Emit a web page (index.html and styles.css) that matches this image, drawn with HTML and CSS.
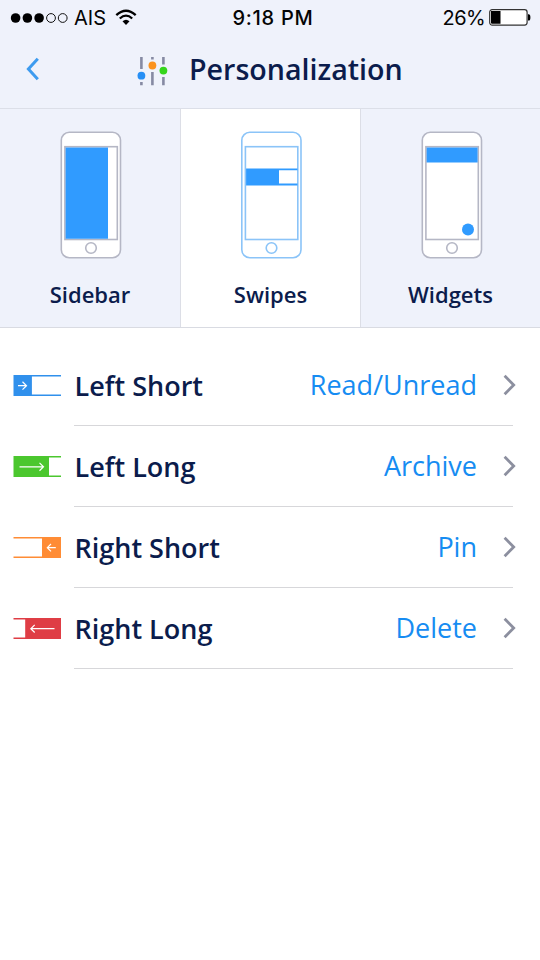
FILE: index.html
```html
<!DOCTYPE html>
<html lang="en">
<head>
<meta charset="utf-8">
<title>Personalization</title>
<link rel="stylesheet" href="styles.css">
</head>
<body>
<header class="top">
  <div class="status">
    <div class="carrier">
      <svg width="58" height="12" viewBox="0 0 58 12"><g fill="#000"><circle cx="5.6" cy="6" r="4.8"/><circle cx="17.4" cy="6" r="4.8"/><circle cx="29.1" cy="6" r="4.8"/></g><g fill="none" stroke="#111" stroke-width="1"><circle cx="41" cy="6" r="4.4"/><circle cx="52.7" cy="6" r="4.4"/></g></svg>
      <span class="ais">AIS</span>
      <svg class="wifi" width="22" height="17" viewBox="0 0 22 17"><g fill="none" stroke="#000" stroke-width="2.3"><path d="M1.3 6.2Q11 -2.8 20.7 6.2"/><path d="M4.8 9.5Q11 3.8 17.2 9.5"/></g><path d="M7.5 12.3Q11 9.3 14.5 12.3L11 16Z"/></svg>
    </div>
    <span class="time">9:18 PM</span>
    <div class="battery">
      <span class="percent">26%</span>
      <svg width="42" height="17" viewBox="0 0 42 17"><rect x=".7" y=".7" width="37.4" height="15.4" rx="2.5" fill="#fff" stroke="#333" stroke-width="1.2"/><path d="M2 2h9.5v12.8H3Q2 14.8 2 13.8ZM39 5.2h.6q1.8 0 1.8 3.2t-1.8 3.2H39Z"/></svg>
    </div>
  </div>
  <div class="nav">
    <svg class="back" width="14" height="24" viewBox="0 0 14 24"><path d="M11.8 1.8 2.4 12l9.4 10.2" fill="none" stroke="#3d9bef" stroke-width="3"/></svg>
    <svg class="sliders" width="31" height="30" viewBox="0 0 31 30"><path d="M4.4 1v12M4.4 26v3.2M15.4 1v2.5M15.4 16v13.2M26.4 1v7.5M26.4 21v8.2" stroke="#868aa3" stroke-width="2.6"/><circle cx="4.4" cy="19.7" r="3.9" fill="#268ff5"/><circle cx="15.4" cy="9.5" r="3.9" fill="#fb931e"/><circle cx="26.4" cy="14.6" r="3.9" fill="#35d51b"/></svg>
    <h1>Personalization</h1>
  </div>
</header>
<nav class="tabs">
  <div class="tab">
    <svg width="62" height="128" viewBox="0 0 62 128"><g fill="#fff" stroke="#b5b7c5" stroke-width="1.6"><rect x="1.3" y="1.3" width="59.2" height="125.4" rx="8"/><rect x="4.9" y="15.7" width="52.4" height="92.8"/><circle cx="31" cy="117" r="5.3"/></g><path d="M5.6 16.5H48v91.2H5.6Z" fill="#309bff"/></svg>
    <span>Sidebar</span>
  </div>
  <div class="tab active">
    <svg width="62" height="128" viewBox="-0.5 0 62 128"><g fill="#fff" stroke="#8bc4f8" stroke-width="1.6"><rect x="1.3" y="1.3" width="59.2" height="125.4" rx="8"/><rect x="4.9" y="15.7" width="52.4" height="92.8"/><circle cx="31" cy="117" r="5.3"/></g><path d="M5.6 37.6H57v1.6H38.5V52.6H57v1.8H5.6Z" fill="#309bff"/></svg>
    <span>Swipes</span>
  </div>
  <div class="tab">
    <svg width="62" height="128" viewBox="0 0 62 128"><g fill="#fff" stroke="#b5b7c5" stroke-width="1.6"><rect x="1.3" y="1.3" width="59.2" height="125.4" rx="8"/><rect x="4.9" y="15.7" width="52.4" height="92.8"/><circle cx="31" cy="117" r="5.3"/></g><path d="M5.6 16.5H56.6V31.5H5.6Z" fill="#309bff"/><circle cx="47" cy="98.5" r="6" fill="#309bff"/></svg>
    <span>Widgets</span>
  </div>
</nav>
<main class="list">
  <div class="row">
    <svg class="swipe" width="48" height="21" viewBox="0 0 48 21"><path d="M.5 0H48V1.6H18.9V19.4H48V21H.5Z" fill="#3090ec"/><path d="M5 10.7h8.5M9.5 6.8l4 3.9-4 3.9" class="arrow"/></svg>
    <div class="content"><span class="label">Left Short</span><span class="value">Read/Unread</span>
    <svg class="chevron" width="14" height="22" viewBox="0 0 14 22"><path d="M1.6 1.8 10.7 11l-9.1 9.2"/></svg></div>
  </div>
  <div class="row">
    <svg class="swipe" width="48" height="21" viewBox="0 0 48 21"><path d="M.5 0H48V1.6H36V19.4H48V21H.5Z" fill="#4bc72e"/><path d="M6.5 10.8h24M26.5 6.9l4 3.9-4 3.9" class="arrow"/></svg>
    <div class="content"><span class="label">Left Long</span><span class="value">Archive</span>
    <svg class="chevron" width="14" height="22" viewBox="0 0 14 22"><path d="M1.6 1.8 10.7 11l-9.1 9.2"/></svg></div>
  </div>
  <div class="row">
    <svg class="swipe" width="48" height="21" viewBox="0 0 48 21"><path d="M.5 0H48V21H.5V19.4H29V1.6H.5Z" fill="#ff8c35"/><path d="M42.8 10.7h-8.3M38 7l-3.7 3.7 3.7 3.7" class="arrow"/></svg>
    <div class="content"><span class="label">Right Short</span><span class="value">Pin</span>
    <svg class="chevron" width="14" height="22" viewBox="0 0 14 22"><path d="M1.6 1.8 10.7 11l-9.1 9.2"/></svg></div>
  </div>
  <div class="row">
    <svg class="swipe" width="48" height="21" viewBox="0 0 48 21"><path d="M.5 0H48V21H.5V19.4H12.2V1.6H.5Z" fill="#df3d45"/><path d="M41.5 10.7H17.8M21.7 6.9l-3.9 3.8 3.9 3.8" class="arrow"/></svg>
    <div class="content"><span class="label">Right Long</span><span class="value">Delete</span>
    <svg class="chevron" width="14" height="22" viewBox="0 0 14 22"><path d="M1.6 1.8 10.7 11l-9.1 9.2"/></svg></div>
  </div>
</main>
</body>
</html>
```
FILE: styles.css
```css
* { box-sizing: border-box; }
body { margin: 0; width: 540px; height: 960px; overflow: hidden; background: #fff; color: #0b1c4c; font-family: "Open Sans", sans-serif; }
svg { display: block; flex: none; }
.top { height: 109px; background: #eff2fb; border-bottom: 1px solid #dcdfe8; }
.status { display: grid; grid-template-columns: 1fr auto 1fr; height: 35px; align-items: center; padding: 0 9px 0 11px; color: #050505; font: 20px/24px Inter, sans-serif; }
.carrier { display: flex; align-items: center; margin-left: -1px; }
.ais { margin-left: 6px; }
.wifi { margin-left: 9px; }
.time { margin-left: 4px; font-weight: 500; letter-spacing: .75px; }
.battery { display: flex; align-items: center; justify-content: flex-end; gap: 5px; }
.percent { margin-right: -1px; letter-spacing: -.6px; }
.nav { display: flex; height: 68px; align-items: center; padding-left: 26px; }
.sliders { margin-left: 97px; margin-top: 3px; }
h1 { margin: 0 0 0 21px; font-size: 28.6px; line-height: 38px; font-weight: 600; }
.tabs { display: grid; grid-template-columns: 180px 181px 179px; height: 219px; border-bottom: 1px solid #d9dbe2; }
.tab { display: flex; flex-direction: column; align-items: center; padding-top: 22px; background: #eff2fb; font-size: 22px; line-height: 30px; font-weight: 600; }
.tab svg { margin-left: 2px; }
.tab span { margin-top: 20px; }
.active { background: #fff; border-left: 1px solid #dcdee6; border-right: 1px solid #dcdee6; }
.active svg { margin-left: 1px; }
.list { padding: 17px 27px 0 13px; }
.row { display: flex; height: 81px; }
.swipe { margin-top: 30px; }
.arrow { fill: none; stroke: #fff; stroke-width: 1.2; }
.content { display: flex; align-items: center; margin-left: 13px; width: 439px; border-bottom: 1px solid #d7d7da; }
.label { padding: 2px 0 0 .5px; font-size: 27px; line-height: 38px; font-weight: 600; white-space: nowrap; }
.value { margin-left: auto; font-size: 27px; line-height: 38px; color: #168cf2; }
.chevron { margin: 0 -4px 0 26px; }
.chevron path { fill: none; stroke: #8c8f9f; stroke-width: 2.8; }
```
